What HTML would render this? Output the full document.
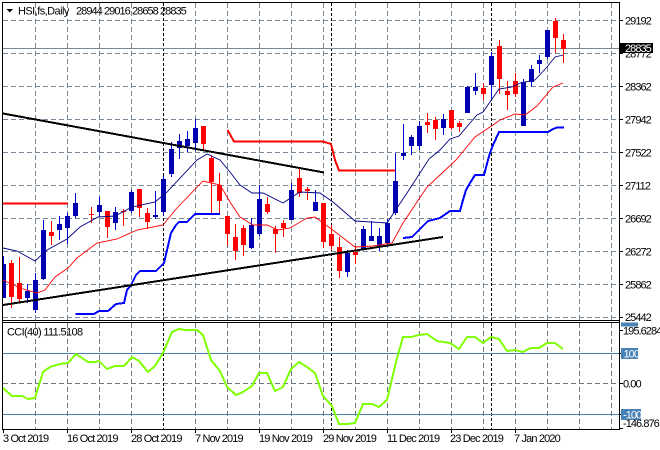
<!DOCTYPE html>
<html><head><meta charset="utf-8"><style>
html,body{margin:0;padding:0;background:#fff}
svg{display:block}
text{font-family:"Liberation Sans",sans-serif;font-size:11px;fill:#000;letter-spacing:-.95px;font-weight:normal}
.d text{letter-spacing:-.85px}
</style></head><body>
<svg width="660" height="450" viewBox="0 0 660 450" xmlns="http://www.w3.org/2000/svg">
<rect width="660" height="450" fill="#fff"/>
<g shape-rendering="crispEdges" fill="none">
<!-- horizontal grid -->
<path stroke="#778899" stroke-dasharray="5 3" d="M3 20.5H619M3 53.5H619M3 86.5H619M3 119.5H619M3 152.5H619M3 185.5H619M3 218.5H619M3 251.5H619M3 284.5H619M3 317.5H619"/>
<!-- vertical grid -->
<path stroke="#778899" stroke-dasharray="5 3" d="M35.5 3V320M67.5 3V320M99.5 3V320M131.5 3V320M195.5 3V320M227.5 3V320M259.5 3V320M291.5 3V320M323.5 3V320M355.5 3V320M387.5 3V320M419.5 3V320M451.5 3V320M483.5 3V320M515.5 3V320M547.5 3V320M579.5 3V320M611.5 3V320"/>
<path stroke="#6f7780" stroke-dasharray="5 3" d="M35.5 323V429M67.5 323V429M99.5 323V429M131.5 323V429M195.5 323V429M227.5 323V429M259.5 323V429M291.5 323V429M323.5 323V429M355.5 323V429M387.5 323V429M419.5 323V429M451.5 323V429M483.5 323V429M515.5 323V429M547.5 323V429M579.5 323V429M611.5 323V429M3 383.5H619"/>
<path stroke="#000" stroke-dasharray="3 2" d="M163.5 3V320M331.5 3V320M491.5 3V320M163.5 323V429M331.5 323V429M491.5 323V429"/>
<path stroke="#778899" d="M3 48.5H620"/>
<path stroke="#4682b4" d="M3 353.5H620M3 414.5H620"/>
<!-- red wicks -->
<path stroke="#f00" d="M11.5 260V308M19.5 257V303M51.5 221V245M91.5 207V223M107.5 211V238M123.5 209V226M139.5 189V217M147.5 208V229M203.5 126V151M211.5 155V213M219.5 173V213M227.5 216V246M235.5 224V260M243.5 225V256M267.5 197V214M275.5 226V253M283.5 220V237M299.5 168V197M307.5 187V200M323.5 203V248M331.5 225V250M339.5 237V278M355.5 246V264M427.5 113V133M435.5 117V140M451.5 110V130M459.5 121V132M483.5 83V100M499.5 40V94M507.5 81V110M515.5 73V97M555.5 18V53M563.5 34V63"/>
<!-- red bodies -->
<path stroke="#f00" stroke-width="5" d="M11.5 263V297M19.5 283V299M51.5 232V236M107.5 211V227M139.5 189V208M147.5 213V222M203.5 126V144M211.5 158V182M219.5 185V201M227.5 216V234M235.5 237V251M243.5 228V245M267.5 204V212M275.5 229V234M283.5 223V228M299.5 178V193M323.5 203V242M331.5 234V246M339.5 247V271M355.5 252V255M427.5 122V125M435.5 120V129M451.5 110V128M459.5 123V127M483.5 88V94M499.5 46V79M507.5 91V95M515.5 81V94M555.5 21V38M563.5 40V49"/>
<path stroke="#f00" stroke-width="5" d="M91.5 214V215M123.5 211V212M307.5 189V191"/>
<!-- blue wicks -->
<path stroke="#0000d8" d="M3.5 256V298M27.5 284V303M35.5 273V313M43.5 220V280M59.5 216V240M67.5 213V244M75.5 193V218M99.5 197V217M115.5 207V230M131.5 190V213M155.5 191V219M163.5 176V215M171.5 142V177M179.5 134V159M187.5 131V152M195.5 119V151M251.5 218V249M259.5 185V236M291.5 183V220M315.5 190V211M347.5 250V277M363.5 226V250M371.5 221V241M379.5 228V251M387.5 219V246M395.5 153V215M403.5 124V160M411.5 135V155M419.5 121V150M443.5 114V135M467.5 86V113M475.5 73V95M491.5 52V100M523.5 79V126M531.5 65V87M539.5 55V73M547.5 30V59"/>
<!-- blue bodies -->
<path stroke="#0000b0" stroke-width="5" d="M3.5 264V298M27.5 291V298M35.5 280V310M43.5 230V279M59.5 224V230M67.5 216V228M75.5 203V216M99.5 205V212M115.5 212V223M131.5 192V211M155.5 215V217M163.5 179V212M171.5 149V174M179.5 141V148M187.5 139V146M195.5 128V143M251.5 225V248M259.5 199V234M291.5 190V220M315.5 202V211M347.5 253V272M363.5 229V249M371.5 236V241M379.5 236V246M387.5 223V243M395.5 181V213M403.5 153V156M411.5 137V146M419.5 126V146M443.5 119V128M467.5 87V113M475.5 87V91M491.5 56V85M523.5 82V126M531.5 69V82M539.5 60V64M547.5 30V57"/>
</g>
<g fill="none">
<!-- moving averages -->
<polyline stroke="#f00" stroke-width=".9" points="3,280 20,288 37,293 45,290 55,277 68,268 77,258 97,243 117,239 137,230 163,225 177,208 203,181 220,185 230,202 240,217 253,225 267,225 278,230 290,228 307,218 315,217 330,228 355,247 373,246 392,243 403,223 427,187 440,175 456,160 475,137 493,125 500,120 515,114 525,115 537,106 553,87 563,83"/>
<polyline stroke="#000080" stroke-width=".9" points="3,248 17,251 35,261 47,250 67,239 80,227 98,217 115,216 132,207 155,202 167,192 197,160 207,154 220,160 230,172 240,185 252,193 263,193 283,203 292,197 300,192 320,193 333,202 355,221 387,223 397,208 407,193 429,159 440,150 450,139 459,136 470,123 477,115 483,112 499,89 512,87 520,83 535,80 547,67 555,57 563,55"/>
</g>
<g shape-rendering="crispEdges" fill="none">
<!-- thick blue -->
<g stroke="#0000ff" stroke-width="2">
<polyline points="75.5,314 94,314 99,311 108,311 116,304 124,303 127,290 131,285 136,275 140,271 156,271 164,263 167,250 171,233 176,225 179,222 187,222 195,214 220,214"/>
<polyline points="403,238 412,237 425,224 428,221 440,218 450,211 460,211 463,200 466,190 470,183 475,175 484,175 488,160 490,153 493,145 499,132 548,132 553,129 557,127.5 564,127.5"/>
</g>
<!-- thick red -->
<g stroke="#f00" stroke-width="2">
<path d="M3 203.5H68"/>
<polyline points="227.5,130 234,141.5 323,141.5 331,144 335,160 339,170.5 395,170.5"/>
</g>
<!-- trendlines -->
<g stroke="#000" stroke-width="2">
<line x1="3" y1="113.5" x2="324" y2="172.5"/>
<line x1="3" y1="305" x2="443" y2="237"/>
</g>
<!-- CCI -->
<polyline stroke="#7fff00" stroke-width="2" points="3,388 12,396 22,396 28,399 35,398 43,372 50,367 60,364 68,363 76,354 88,362 95,362 99,361 107,369 115,366 124,366 132,357 139,361 148,372 155,366 163,353 172,332 179,329 185,330 197,330 203,335 211,360 220,371 227,387 236,395 243,392 252,386 259,373 267,373 275,391 283,387 291,369 299,362 307,367 315,373 323,396 332,406 339,424 347,424 355,423 363,404 372,404 379,407 387,400 396,362 403,337 411,337 419,335 427,334 437,341 450,343 459,349 467,337 475,337 483,343 491,337 499,339 507,351 515,350 523,352 531,348 539,348 547,343 555,343 563,349"/>
<!-- clean outside + frame -->
<rect x="0" y="0" width="2" height="450" fill="#fff"/>
<rect x="620" y="3" width="40" height="430" fill="#fff"/>
<path stroke="#000" d="M2.5 2.5H619.5V429.5H2.5ZM2.5 320.5H619.5M2.5 322.5H619.5"/>
<path stroke="#000" d="M3.5 430V433M67.5 430V433M131.5 430V433M195.5 430V433M259.5 430V433M323.5 430V433M387.5 430V433M451.5 430V433M515.5 430V433"/>
<path stroke="#000" d="M620 20.5H623M620 53.5H623M620 86.5H623M620 119.5H623M620 152.5H623M620 185.5H623M620 218.5H623M620 251.5H623M620 284.5H623M620 317.5H623M620 330.5H623M620 353.5H623M620 383.5H623M620 414.5H623M620 428.5H623"/>
</g>
<!-- title -->
<path d="M6.5 9H13L9.7 12.5Z" fill="#000"/>
<text x="18" y="14.5" style="letter-spacing:-.55px">HSI,fs,Daily</text>
<text x="76" y="14.5">28944</text>
<text x="104" y="14.5">29016</text>
<text x="132" y="14.5">28658</text>
<text x="160" y="14.5">28835</text>
<text x="7" y="335.5" style="letter-spacing:-.65px">CCI(40) 111.5108</text>
<!-- price axis -->
<text x="625" y="24.5">29192</text>
<text x="625" y="57.5">28772</text>
<text x="625" y="90.5">28362</text>
<text x="625" y="123.5">27942</text>
<text x="625" y="156.5">27522</text>
<text x="625" y="189.5">27112</text>
<text x="625" y="222.5">26692</text>
<text x="625" y="255.5">26272</text>
<text x="625" y="288.5">25862</text>
<text x="625" y="321" >25442</text>
<rect x="620" y="43" width="33" height="10" fill="#000"/>
<text x="625" y="52" style="fill:#fff">28835</text>
<!-- CCI axis -->
<rect x="621" y="322.5" width="17" height="4" fill="#4682b4"/>
<text x="623" y="334.5">195.6284</text>
<rect x="621" y="348" width="17" height="11" fill="#4682b4"/>
<text x="623.5" y="357.5" style="fill:#fff">100</text>
<text x="623" y="387.5">0.00</text>
<rect x="621" y="409" width="20" height="11" fill="#4682b4"/>
<text x="623" y="418.5" style="fill:#fff">-100</text>
<text x="623" y="427">-146.876</text>
<!-- date axis -->
<g class="d">
<text x="3" y="442">3 Oct 2019</text>
<text x="67" y="442">16 Oct 2019</text>
<text x="131" y="442">28 Oct 2019</text>
<text x="195" y="442">7 Nov 2019</text>
<text x="259" y="442">19 Nov 2019</text>
<text x="323" y="442">29 Nov 2019</text>
<text x="387" y="442">11 Dec 2019</text>
<text x="450" y="442">23 Dec 2019</text>
<text x="514" y="442">7 Jan 2020</text>
</g>
</svg>
</body></html>
